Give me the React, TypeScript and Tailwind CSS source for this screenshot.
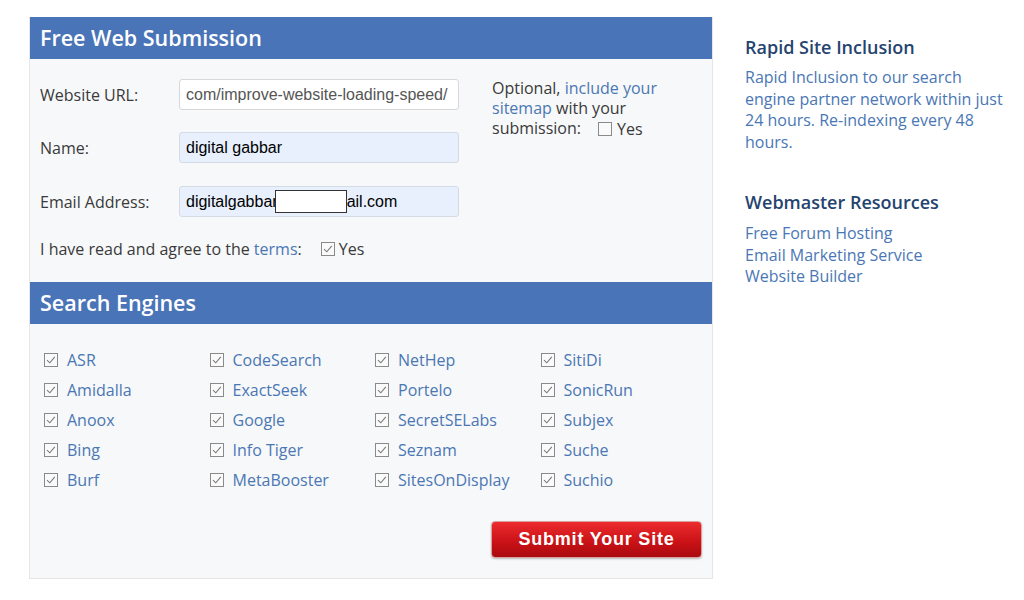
import React from "react";

const engines = [
  ["ASR", "Amidalla", "Anoox", "Bing", "Burf"],
  ["CodeSearch", "ExactSeek", "Google", "Info Tiger", "MetaBooster"],
  ["NetHep", "Portelo", "SecretSELabs", "Seznam", "SitesOnDisplay"],
  ["SitiDi", "SonicRun", "Subjex", "Suche", "Suchio"],
];

function Check({ checked = true }: { checked?: boolean }) {
  return (
    <svg width="14" height="14" viewBox="0 0 14 14" className="shrink-0">
      <rect x="0.5" y="0.5" width="13" height="13" fill="#fafafa" stroke="#8a8a8a" strokeWidth="1" />
      {checked && (
        <path d="M3 7.2 L5.8 9.8 L10.8 3.8" fill="none" stroke="#7a7a7a" strokeWidth="1.1" />
      )}
    </svg>
  );
}

export default function App() {
  return (
    <div
      className="w-[1024px] h-[600px] bg-white text-[#3a3a3a] overflow-hidden"
      style={{ fontFamily: '"Open Sans", "Noto Sans", sans-serif' }}
    >
      <div className="flex pt-[17px] pl-[29px]">
        {/* Left panel */}
        <div className="w-[684px] h-[562px] bg-[#f7f8f9] border border-[#e6e6e6] border-t-0">
          <div className="h-[42px] bg-[#4a74b8] flex items-center pl-[10px] text-white text-[21.5px] font-semibold">
            Free Web Submission
          </div>
          <div className="flex pl-[10px] pt-[20px]">
            <div className="w-[452px]">
              <div className="flex items-center h-[31px]">
                <div className="w-[139px] text-[16px]">Website URL:</div>
                <div
                  className="w-[280px] h-[31px] rounded-[3px] border border-[#d8d8d8] bg-white flex items-center pl-[6px] text-[16px] text-[#555] overflow-hidden whitespace-nowrap"
                  style={{ fontFamily: '"Liberation Sans", Arial, sans-serif' }}
                >
                  com/improve-website-loading-speed/
                </div>
              </div>
              <div className="flex items-center h-[31px] mt-[22px]">
                <div className="w-[139px] text-[16px]">Name:</div>
                <div
                  className="w-[280px] h-[31px] rounded-[3px] border border-[#d4dbe3] bg-[#e8f0fe] flex items-center pl-[6px] text-[16px] text-black"
                  style={{ fontFamily: '"Liberation Sans", Arial, sans-serif' }}
                >
                  digital gabbar
                </div>
              </div>
              <div className="flex items-center h-[31px] mt-[23px]">
                <div className="w-[139px] text-[16px]">Email Address:</div>
                <div
                  className="w-[280px] h-[31px] rounded-[3px] border border-[#d4dbe3] bg-[#e8f0fe] flex items-center pl-[6px] text-[16px] text-black whitespace-nowrap"
                  style={{ fontFamily: '"Liberation Sans", Arial, sans-serif' }}
                >
                  <span>digitalgabbar</span>
                  <span className="inline-block w-[72px] h-[23px] bg-white border border-[#333] -ml-[3px]" />
                  <span>ail.com</span>
                </div>
              </div>
              <div className="flex items-center mt-[20px] text-[16px] h-[24px]">
                <span>
                  I have read and agree to the <span className="text-[#4a77b4]">terms</span>:
                </span>
                <span className="ml-[19px] flex items-center gap-[4px]">
                  <Check />
                  <span>Yes</span>
                </span>
              </div>
            </div>
            <div className="w-[178px] -mt-[1px] text-[16px] leading-[20px]">
              Optional, <span className="text-[#4a77b4]">include your sitemap</span> with your
              submission:
              <span className="inline-flex items-center gap-[5px] ml-[17px] align-[-2px]">
                <Check checked={false} />
                <span>Yes</span>
              </span>
            </div>
          </div>

          <div className="h-[42px] mt-[21px] bg-[#4a74b8] flex items-center pl-[10px] text-white text-[21.5px] font-semibold">
            Search Engines
          </div>
          <div className="flex pl-[14px] pt-[21px]">
            {engines.map((col, i) => (
              <div key={i} className="w-[165.5px] flex flex-col">
                {col.map((e) => (
                  <div key={e} className="h-[30px] flex items-center gap-[9px] text-[16px] text-[#4a77b4]">
                    <Check />
                    <span>{e}</span>
                  </div>
                ))}
              </div>
            ))}
          </div>
          <div className="flex justify-end pr-[10px] mt-[26px]">
            <button
              className="w-[211px] h-[37px] rounded-[4px] border border-[#d9a0a0] bg-[linear-gradient(#ec2b2e,#c81116_60%,#a90b0f)] text-white text-[18px] font-bold tracking-[0.8px] shadow-[0_1px_2px_rgba(0,0,0,0.25)]"
              style={{ fontFamily: '"Liberation Sans", Arial, sans-serif' }}
            >
              Submit Your Site
            </button>
          </div>
        </div>

        {/* Right column */}
        <div className="ml-[32px] w-[265px] pt-[18px]">
          <div className="text-[18px] font-semibold text-[#25436f] leading-[24px]">Rapid Site Inclusion</div>
          <div className="mt-[8px] text-[16px] leading-[21.5px] text-[#4a77b4]">
            Rapid Inclusion to our search engine partner network within just 24 hours. Re-indexing every 48
            hours.
          </div>
          <div className="mt-[37px] text-[18px] font-semibold text-[#25436f] leading-[24px]">
            Webmaster Resources
          </div>
          <div className="mt-[9px] text-[16px] leading-[21.5px] text-[#4a77b4] flex flex-col">
            <span>Free Forum Hosting</span>
            <span>Email Marketing Service</span>
            <span>Website Builder</span>
          </div>
        </div>
      </div>
    </div>
  );
}
